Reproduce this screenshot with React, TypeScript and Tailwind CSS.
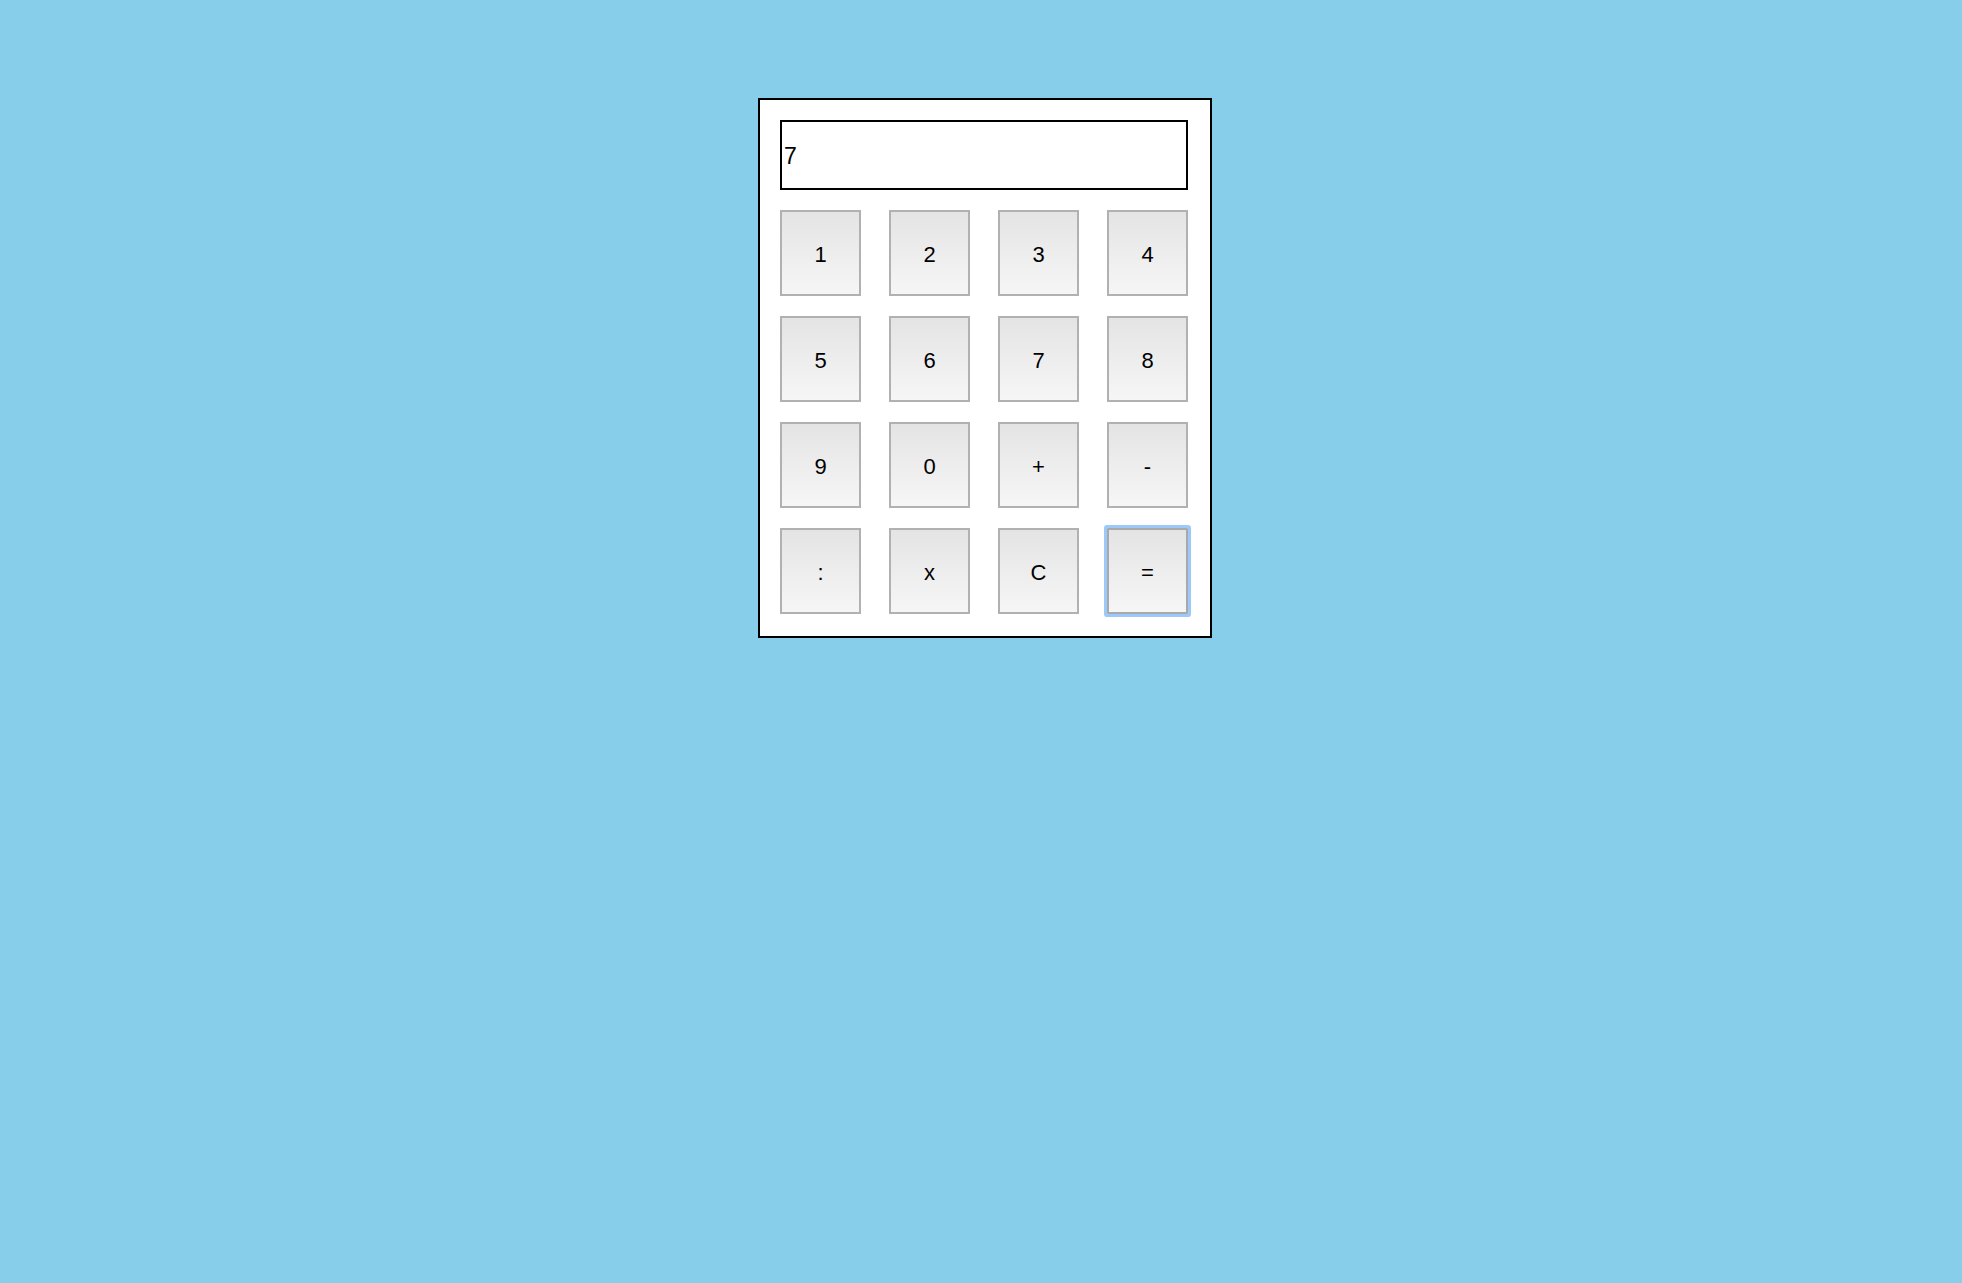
import React from 'react';

const KEYS = ['1', '2', '3', '4', '5', '6', '7', '8', '9', '0', '+', '-', ':', 'x', 'C', '='];

export default function App() {
  const [display, setDisplay] = React.useState('7');

  const press = (k: string) => {
    if (k === 'C') return setDisplay('');
    if (k === '=') {
      try {
        const expr = display.replace(/x/g, '*').replace(/:/g, '/');
        // eslint-disable-next-line no-new-func
        setDisplay(String(Function(`return (${expr})`)()));
      } catch {
        setDisplay('Error');
      }
      return;
    }
    setDisplay(display + k);
  };

  return (
    <div className="min-h-screen bg-[#87CEEB] pt-[98px] font-['Liberation_Sans',Arial,sans-serif]">
      <div className="ml-[758px] w-[454px] border-2 border-black bg-white pt-[20px] pl-[20px] pr-[22px] pb-[22px]">
        <input
          type="text"
          value={display}
          readOnly
          className="block h-[70px] w-full border-2 border-black bg-white pl-[2px] pt-[2px] text-[23px] text-black outline-none"
        />
        <div className="mt-[20px] grid grid-cols-4 gap-x-[28px] gap-y-[20px]">
          {KEYS.map((k) => (
            <button
              key={k}
              onClick={() => press(k)}
              className={
                k === '='
                  ? 'h-[86px] rounded-[1px] border-2 border-[#a9a9a9] bg-linear-to-b from-[#e4e4e4] to-[#f6f6f6] pt-[2px] text-[22px] text-black shadow-[0_0_0_3px_#9dc9fa]'
                  : 'h-[86px] border-2 border-[#b1b1b1] bg-linear-to-b from-[#e4e4e4] to-[#f6f6f6] pt-[2px] text-[22px] text-black'
              }
            >
              {k}
            </button>
          ))}
        </div>
      </div>
    </div>
  );
}
